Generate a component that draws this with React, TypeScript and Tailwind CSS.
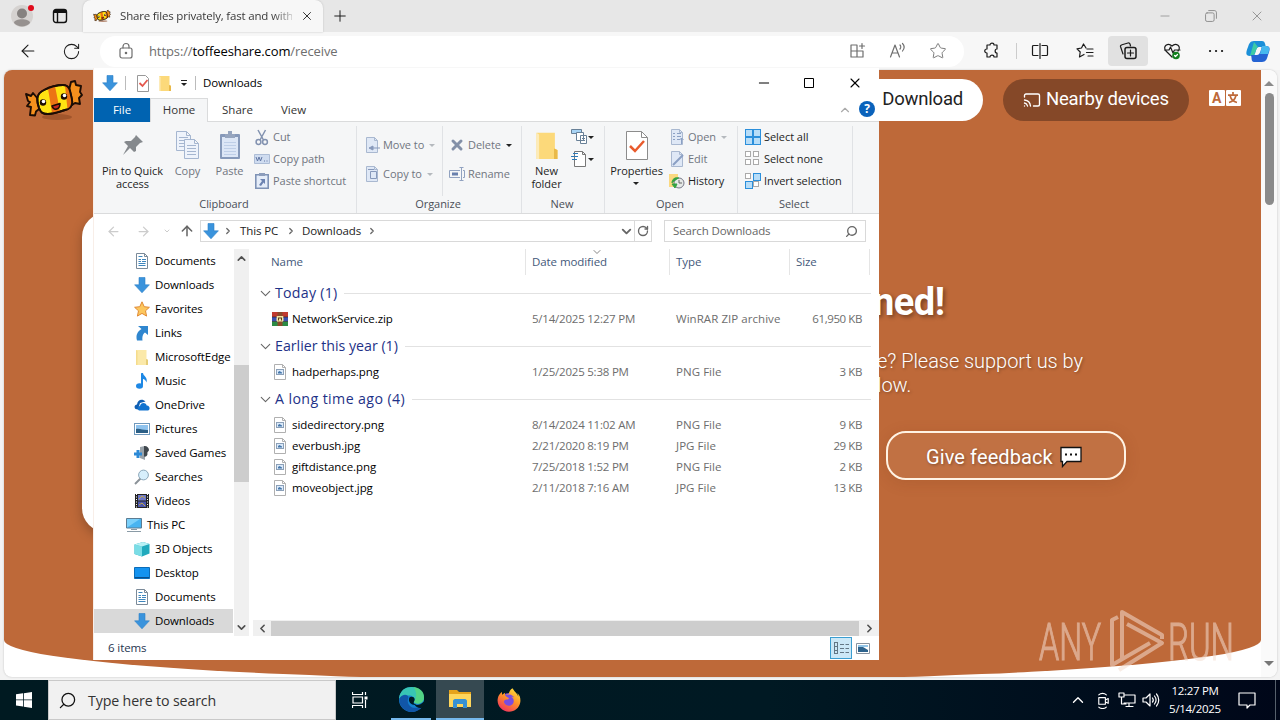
import type { ReactNode } from "react";
import {
    ArrowLeft,
    ArrowRight,
    ArrowUp,
    Cast,
    ChevronDown,
    ChevronLeft,
    ChevronRight,
    ChevronUp,
    Minus,
    Plus,
    RotateCw,
    Search,
    Star,
    X,
} from "lucide-react";
import { FaFirefoxBrowser } from "react-icons/fa6";

type FileItem = {
    name: string;
    date: string;
    type: string;
    size: string;
    zip?: boolean;
};

const groups: { title: string; spacing: string; files: FileItem[] }[] = [
    {
        title: "Today (1)",
        spacing: "tracking-[0.25px]",
        files: [{ name: "NetworkService.zip", date: "5/14/2025 12:27 PM", type: "WinRAR ZIP archive", size: "61,950 KB", zip: true }],
    },
    {
        title: "Earlier this year (1)",
        spacing: "tracking-normal",
        files: [{ name: "hadperhaps.png", date: "1/25/2025 5:38 PM", type: "PNG File", size: "3 KB" }],
    },
    {
        title: "A long time ago (4)",
        spacing: "tracking-[0.4px]",
        files: [
            { name: "sidedirectory.png", date: "8/14/2024 11:02 AM", type: "PNG File", size: "9 KB" },
            { name: "everbush.jpg", date: "2/21/2020 8:19 PM", type: "JPG File", size: "29 KB" },
            { name: "giftdistance.png", date: "7/25/2018 1:52 PM", type: "PNG File", size: "2 KB" },
            { name: "moveobject.jpg", date: "2/11/2018 7:16 AM", type: "JPG File", size: "13 KB" },
        ],
    },
];

/* ---------- small drawings ---------- */

function DownArrow() {
    return (
        <svg width="16" height="16" viewBox="0 0 16 16" className="shrink-0">
            <path d="M5 .5h6v7.3h4.4L8 15.8.6 7.8H5z" fill="#3a93dc" stroke="#2b7fc8" strokeWidth=".6" />
        </svg>
    );
}

function DocIcon() {
    return (
        <svg width="16" height="16" viewBox="0 0 16 16" className="shrink-0">
            <path d="M2.500.5h8l3 3v12h-11z" fill="#fff" stroke="#7b8a99" />
            <path d="M4.500 3.500h4M4.500 6.500h2.500M8 6.500h4M4.500 8.500h2.500M8 8.500h4M4.500 10.500h7M4.500 12.500h7" stroke="#3f86bd" />
            <path d="M10.500.5v3h3" fill="none" stroke="#7b8a99" />
        </svg>
    );
}

function FolderIcon({ size = 16, bright = false }: { size?: number; bright?: boolean }) {
    return (
        <svg width={size} height={size} viewBox="0 0 16 16" className="shrink-0">
            <path d="M2 1h10.500v9l1.500 1v5H2z" fill={bright ? "#fcd97a" : "#fbe9a9"} />
            <path d="M12 10l2 .8V16h-2z" fill={bright ? "#e9b949" : "#e6cd78"} />
            <path d="M2 1l1.500 1v14H2z" fill={bright ? "#fdebb8" : "#f5dc8c"} />
        </svg>
    );
}

function PictureFile() {
    return (
        <svg width="16" height="16" viewBox="0 0 16 16" className="shrink-0">
            <path d="M2.500.5h8l3 3v12h-11z" fill="#fff" stroke="#b0b0b0" />
            <path d="M10.500.5v3h3" fill="none" stroke="#b0b0b0" />
            <rect x="4.500" y="5.500" width="7" height="5" fill="#dceafa" stroke="#8ba0b8" />
            <path d="M6 9.500V8l1.500-1L10 8.500v1z" fill="#4577aa" />
        </svg>
    );
}

function ZipFile() {
    return (
        <svg width="16" height="16" viewBox="0 0 16 16" className="shrink-0">
            <path d="M0 1h16v5H0z" fill="#c03a30" />
            <path d="M0 6h16v4.500H0z" fill="#3a4fb0" />
            <path d="M0 10.500h16V15H0z" fill="#2b8b45" />
            <path d="M5.500 1h5v14h-5z" fill="#8c4a2a" />
            <path d="M4.500 5h7v5.500h-7z" fill="#f3e3a4" />
            <path d="M6.500 6.500v3M9.500 6.500v3M8 6v2" stroke="#5c3a18" />
            <path d="M0 6h5M11 6h5M0 10.500h5M11 10.500h5" stroke="#222" strokeWidth=".6" />
        </svg>
    );
}

function TreeIcon({ kind }: { kind: string }) {
    if (kind === "doc") return <DocIcon />;
    if (kind === "down") return <DownArrow />;
    if (kind === "folder") return <FolderIcon />;
    return (
        <svg width="16" height="16" viewBox="0 0 16 16" className="shrink-0">
            {kind === "star" && (
                <path d="M8 .8l2.200 4.900 5.200.6-3.900 3.500 1.100 5.300L8 12.400l-4.600 2.700 1.100-5.300L.6 6.300l5.200-.6z" fill="#fcc75e" stroke="#e08a35" />
            )}
            {kind === "link" && (
                <path d="M4 1h10v9l-3-2.600C9 9 8 11 8.500 15.500H3C1.500 10 3.500 6.500 7.500 4z" fill="#2f86cf" />
            )}
            {kind === "music" && (
                <>
                    <path d="M8 1v11.500" stroke="#1e88e5" strokeWidth="2" />
                    <path d="M7 0h2c.5 3.500 5 4 3.500 9.500-.5-2-2-3.300-4-3.800z" fill="#1e88e5" />
                    <ellipse cx="5.500" cy="13" rx="3.500" ry="2.700" fill="#1e88e5" />
                </>
            )}
            {kind === "cloud" && (
                <>
                    <path d="M1.500 12C-.5 10 1 7.500 3 7.500 3.500 3 8 1 11.500 4.500L6 6l-2 6.500z" fill="#0f5fb4" />
                    <path d="M5 13.500c-2-1-1.500-4 1-4.500.5-3.500 5.500-4 6.700-.6 3.300-.3 3.800 4.500 1.300 5.100z" fill="#1173d0" />
                </>
            )}
            {kind === "picture" && (
                <>
                    <rect x=".5" y="2.500" width="15" height="11" fill="#fff" stroke="#6f99bd" />
                    <path d="M2 4h12v8H2z" fill="#8fc3ee" />
                    <path d="M2 8c4-1 7 1.500 12 1v3H2z" fill="#2b5f86" />
                </>
            )}
            {kind === "game" && (
                <>
                    <path d="M6 2l5-1v14l-5-2z" fill="#9aa3aa" />
                    <path d="M10 1c2.500-.5 5 1.500 5 4-.5 2-2 1.500-1.500 4 0 2-2 3-3.500 2.500z" fill="#3f474d" />
                    <path d="M4 5v8M0 9h8" stroke="#2d8ad6" strokeWidth="3" />
                </>
            )}
            {kind === "search" && (
                <>
                    <path d="M7 9l-6 6" stroke="#8b9298" strokeWidth="2" />
                    <circle cx="9.500" cy="6" r="4.900" fill="#d7effc" stroke="#8da8ba" />
                </>
            )}
            {kind === "video" && (
                <>
                    <path d="M1 1h14v14H1z" fill="#222" />
                    <path d="M4 2h8v5.500H4z" fill="#6d78c8" />
                    <path d="M4 8.500h8V14H4z" fill="#4b57ad" />
                    <path d="M5 6l3-3 3 2M5 12l3-2 3 3" stroke="#c2a84a" fill="none" />
                    <path d="M2.500 1v14M13.500 1v14" stroke="#fff" strokeWidth="1" strokeDasharray="1 1.500" />
                </>
            )}
            {kind === "pc" && (
                <>
                    <path d="M.5 1.500h15v9.500H.5z" fill="#48b4f1" stroke="#5b7c93" />
                    <path d="M1 10.500L14 2H1z" fill="#7bd0fa" />
                    <path d="M5 12.500h6M1 14.500h14" stroke="#8a9ba6" />
                </>
            )}
            {kind === "cube" && (
                <>
                    <path d="M.5 3.500L9 1l6.500 2v9.500l-7.500 3-7.500-2.500z" fill="#20aabd" />
                    <path d="M.5 3.500L8 5.500v10l-7.500-2.500z" fill="#7adde6" />
                    <path d="M.5 3.500L9 1l6.500 2L8 5.500z" fill="#b8f1f5" />
                </>
            )}
            {kind === "desktop" && (
                <>
                    <path d="M.5 2.500h15v11H.5z" fill="#1493f0" stroke="#0b6cb8" />
                    <path d="M1 12.500h14" stroke="#0a4f8c" />
                </>
            )}
        </svg>
    );
}

function Candy({ className }: { className: string }) {
    return (
        <svg viewBox="0 0 60 42" className={className}>
            <ellipse cx="33" cy="38" rx="15" ry="3" fill="#8d4723" opacity=".6" />
            <g stroke="#1d0d05" strokeWidth="1.900" strokeLinejoin="round">
                <path d="M14 20L9 14 7 17 2 15l2 7 2 1-3 4 4 1-1 8 5 .5 1-4 5-4z" fill="#f5901d" />
                <path d="M45 11l2-8 4-1 1 4 5 1-1 6 2 3-3 3 1 6-5-1-3 2-6-7z" fill="#f5901d" />
                <path d="M20 11c6-3 12-5 19-5 4 0 6 2 7 6 1 5 3 10 2 13-1 4-3 5-7 6-6 2-12 4-17 4-5 0-7-1-9-6-2-6-4-14 5-18z" fill="#ffe312" />
                <path d="M24 9.500l7-2.500 5 25-8 2zM41 6.500c3 .5 4 3 5 7l1.500 10c0 4-1 6-4 7z" fill="#ec7414" stroke="none" />
                <path d="M20 11c6-3 12-5 19-5 4 0 6 2 7 6 1 5 3 10 2 13-1 4-3 5-7 6-6 2-12 4-17 4-5 0-7-1-9-6-2-6-4-14 5-18z" fill="none" />
                <circle cx="19" cy="23.500" r="3.200" fill="#1d0d05" stroke="none" />
                <circle cx="40" cy="17.500" r="3.200" fill="#1d0d05" stroke="none" />
                <circle cx="19.500" cy="22.500" r="1.800" fill="#fff" stroke="none" />
                <circle cx="40.500" cy="16.500" r="1.800" fill="#fff" stroke="none" />
                <path d="M28 27l8-2.500c0 6-6 8-8 2.500z" fill="#c3271f" strokeWidth="1.500" />
            </g>
        </svg>
    );
}

/* ---------- browser ---------- */

function Ico({ children, size = 18, className = "" }: { children: ReactNode; size?: number; className?: string }) {
    return (
        <svg width={size} height={size} viewBox="0 0 18 18" fill="none" stroke="currentColor" strokeWidth="1.200" strokeLinejoin="round" strokeLinecap="round" className={`shrink-0 ${className}`}>
            {children}
        </svg>
    );
}

function TabStrip() {
    return (
        <div className="flex h-8 items-center bg-[#e7e7e7] text-[#1a1a1a]">
            <div className="relative ml-2.5 size-6">
                <svg width="24" height="24" viewBox="0 0 24 24">
                    <circle cx="12" cy="12" r="11" fill="#d5d2d0" />
                    <circle cx="12" cy="9.500" r="5" fill="#85817f" />
                    <path d="M4 19c0-5 16-5 16 0-4 4.500-12 4.500-16 0z" fill="#96918f" />
                    <circle cx="21" cy="4" r="3" fill="#e00b1c" />
                </svg>
            </div>
            <svg width="16" height="16" viewBox="0 0 16 16" fill="none" stroke="#111" strokeWidth="1.400" className="ml-[18px]">
                <rect x="1.500" y="1.500" width="13" height="13" rx="2.500" />
                <path d="M2 3.500h12" strokeWidth="3" />
                <path d="M5.500 4v10" />
            </svg>
            <div className="ml-[15px] flex h-8 w-60 items-center rounded-t-lg bg-[#f7f7f7] shadow-[0_0_2px_#bbb]">
                <Candy className="ml-[10px] h-[14px] w-[18px]" />
                <span className="ml-[9px] w-[172px] whitespace-nowrap bg-linear-to-r from-[#333] from-88% to-[#33333344] bg-clip-text text-[11.500px] tracking-[-0.18px] text-transparent">Share files privately, fast and with</span>
                <X size={14} strokeWidth={1.500} className="ml-[8px]" />
            </div>
            <Plus size={18} strokeWidth={1.300} className="ml-[8px]" />
            <div className="ml-auto flex items-center text-[#8b8b8b]">
                <Minus size={14} strokeWidth={1.300} />
                <Ico size={14} className="ml-[32px]">
                    <rect x="2" y="5" width="11" height="11" rx="2" />
                    <path d="M6 2h7c2 0 3 1 3 3v7" />
                </Ico>
                <X size={16} strokeWidth={1.300} className="ml-[31px] mr-[15px]" />
            </div>
        </div>
    );
}

function Toolbar() {
    return (
        <div className="flex h-[38px] items-center bg-[#f7f7f7] text-[#1b1b1b]">
            <ArrowLeft size={20} strokeWidth={1.300} className="ml-[18px]" />
            <RotateCw size={19} strokeWidth={1.300} className="ml-[24px]" />
            <div className="ml-[19px] flex h-[31px] w-[864px] items-center rounded-full bg-white text-[#6e6e6e]">
                <Ico className="ml-[17px]">
                    <rect x="3" y="6" width="12" height="10" rx="2" />
                    <path d="M6 6V4.500a3 3 0 016 0V6" />
                    <circle cx="9" cy="11" r=".7" fill="currentColor" />
                </Ico>
                <span className="ml-[14px] pt-px text-[13px] tracking-[-0.1px]">
                    https://<span className="text-black">toffeeshare.com</span>/receive
                </span>
                <div className="ml-auto mr-[17px] flex items-center gap-[22px]">
                    <Ico>
                        <path d="M2 3h6v6H2zM2 9h6v6H2zM8 9h6v6H8zM13 1.500v5M10.500 4h5" />
                    </Ico>
                    <Ico>
                        <path d="M1.500 15L6 3l4.500 12M3 11h6M11 3c1 1 1 3 0 4M13.500 1.500c2 2 2 5 0 7.500" />
                    </Ico>
                    <Star size={18} strokeWidth={1.200} />
                </div>
            </div>
            <Ico className="ml-[19px]">
                <path d="M4 3h3c0-2.500 4-2.500 4 0h3v4c-2.500 0-2.500 4 0 4v4h-3c0-2.500-4-2.500-4 0H4v-4c-3 0-3-4 0-4z" />
            </Ico>
            <div className="ml-[15px] h-4 w-px bg-[#ccc]" />
            <Ico className="ml-[14px]">
                <path d="M7 3.500H2.500a1 1 0 00-1 1v8a1 1 0 001 1H7M11 3.500h4.500a1 1 0 011 1v8a1 1 0 01-1 1H11M9 1.500v15" />
            </Ico>
            <Ico className="ml-[27px]">
                <path d="M10 6L7.500 2 5.500 6l-4.500.8 3.200 3.200-.7 5L8 12.500M11 7h6M10.500 10.500H17M12 14h5" />
            </Ico>
            <div className="ml-[14px] flex h-[30px] w-10 items-center justify-center rounded bg-[#e1e1e1]">
                <Ico>
                    <path d="M4 12L1.500 4.500C1.200 3.500 2 3 3 2.700L9 1c1-.3 1.700.2 2 1l.5 2" />
                    <rect x="6" y="5.500" width="11" height="11" rx="2" strokeWidth="1.500" />
                    <path d="M11.500 8v6M8.500 11h6" />
                </Ico>
            </div>
            <Ico className="ml-[15px]">
                <path d="M9 15L3 9C-1 4.500 5 0 9 4c4-4 10 .5 6 5M1.500 8H6l1.500-3 2.500 6 1.500-3H17" />
                <circle cx="13" cy="13.500" r="3.800" fill="#13801f" stroke="none" />
                <path d="M11.500 13.500l1 1 2-2" stroke="#fff" />
            </Ico>
            <Ico className="ml-[26px]">
                <path d="M3 9h.1M9 9h.1M15 9h.1" strokeWidth="2.200" />
            </Ico>
            <svg width="26" height="26" viewBox="0 0 26 26" className="ml-[20px]">
                <path d="M9 3h8c3 0 3 3 4 6h-7c-3 0-3 5-5 9H5c-5 0-4-4-2-9 1-3 2-6 6-6z" fill="#1b8fd8" />
                <path d="M9 4l-4 14c6 1 5-7 8-9z" fill="#3ccba6" />
                <path d="M17 24H9c-3 0-2-4-3-7h6c3 0 4-5 5-9h4c5 0 4 4 2 9-1 4-2 7-6 7z" fill="#2463d3" />
                <path d="M17 8h4c5 0 3 5 2 8h-8z" fill="#45b8ee" />
            </svg>
        </div>
    );
}

function WebPage() {
    return (
        <div className="mx-1 mr-[3px] flex h-[607px] overflow-hidden rounded-lg bg-white shadow-[0_0_2px_#bbb]">
            <div className="relative h-[611px] w-[1257px] rounded-b-[50%_41px] bg-[#be6939] text-white [font-family:Roboto,sans-serif]">
                <div className="flex h-[60px] items-center">
                    <Candy className="ml-[20px] h-[42px] w-[60px]" />
                    <div className="ml-auto flex h-[42px] items-center rounded-full bg-white pl-10 pr-5 text-[18.500px] tracking-[-0.2px] text-[#222]">Download</div>
                    <div className="ml-5 flex h-[42px] w-[186px] items-center rounded-full bg-[#854828] pl-5 text-[18.500px] tracking-[-0.2px]">
                        <Cast size={18} strokeWidth={1.800} className="mr-[5px] shrink-0" />
                        <span className="whitespace-nowrap">Nearby devices</span>
                    </div>
                    <div className="-mt-1 ml-5 mr-[20px] flex w-[32px] gap-px text-[14px] font-bold leading-4 text-[#be6939]">
                        <span className="flex h-4 w-4 items-center justify-center rounded-[1px] bg-white">A</span>
                        <span className="flex h-4 w-4 items-center justify-center rounded-[1px] bg-white">
                            <svg width="12" height="12" viewBox="0 0 12 12" fill="none" stroke="currentColor" strokeWidth="1.700">
                                <path d="M6 0v3M1 3.200h10M3 3.500c1 4 3 6 7 7M9 3.500c-1 4-3 6-7 7" />
                            </svg>
                        </span>
                    </div>
                </div>
                {/* main card, mostly covered by the explorer window */}
                <div className="ml-[78px] mt-[83px] h-[319px] w-[600px] rounded-3xl bg-white shadow-[0_4px_12px_rgba(0,0,0,0.25)]" />
                <div className="absolute left-[869px] top-[208px]">
                    <h1 className="text-[38px] font-bold leading-[48px] tracking-[-0.5px] [text-shadow:2px_2px_4px_rgba(0,0,0,0.4)]">ned!</h1>
                    <p className="ml-[4px] mt-[23px] whitespace-pre text-[20px] font-light leading-6 tracking-[-0.05px] [text-shadow:1px_1px_3px_rgba(0,0,0,0.35)]">{"e? Please support us by\nlow."}</p>
                    <button className="ml-[13px] mt-[34px] flex h-[49px] w-60 items-center rounded-[20px] border-2 border-[#fff3e4] bg-white/5 pl-[38px] pt-[2px] text-[20px] tracking-[0.1px] shadow-[0_3px_15px_rgba(110,50,20,0.15)] [text-shadow:1px_1px_3px_rgba(0,0,0,0.35)]">
                        Give feedback
                        <svg width="24" height="22" viewBox="0 0 24 22" className="ml-[6px]">
                            <path d="M2 1.500h20v14H8l-4.500 5v-5H2z" fill="#fff" stroke="#111" strokeWidth="1.300" />
                            <path d="M6 8.500h2M11 8.500h2M16 8.500h2" stroke="#111" strokeWidth="2" />
                        </svg>
                    </button>
                </div>
            </div>
            <div className="flex w-4 flex-col items-center bg-[#fafafa] py-[11px]">
                <div className="border-x-[5px] border-b-[5px] border-x-transparent border-b-[#8b8b8b]" />
                <div className="mt-[7px] h-[112px] w-[9px] shrink-0 rounded-full bg-[#8b8b8b]" />
                <div className="mt-auto border-x-[5px] border-t-[5px] border-x-transparent border-t-[#777]" />
            </div>
        </div>
    );
}

/* ---------- file explorer ---------- */

function Caret({ dim = false, className = "ml-[5px]" }: { dim?: boolean; className?: string }) {
    return <span className={`border-x-[3px] border-t-[3px] border-x-transparent ${dim ? "border-t-[#b5b9be]" : "border-t-[#222]"} ${className}`} />;
}

function Cmd({ icon, label, dim = false, caret }: { icon: ReactNode; label: string; dim?: boolean; caret?: "on" | "off" }) {
    return (
        <div className={`flex h-[22px] items-center whitespace-nowrap ${dim ? "text-[#707580]" : "text-[#1e1e1e]"}`}>
            <span className="mr-[3px] flex w-4 shrink-0 justify-center">{icon}</span>
            {label}
            {caret && <Caret dim={caret === "off"} />}
        </div>
    );
}

function Group({ label, width, children }: { label: string; width: string; children: ReactNode }) {
    return (
        <div className={`flex flex-col border-r border-[#e0e2e5] ${width}`}>
            <div className="flex h-[70px]">{children}</div>
            <div className="pr-[2px] text-center leading-[16px] text-[#4a4f57]">{label}</div>
        </div>
    );
}

function Big({ icon, label, width, dim = false }: { icon: ReactNode; label: string; width: string; dim?: boolean }) {
    return (
        <div className={`flex flex-col items-center ${width}`}>
            <div className="flex h-[38px] items-center justify-center">{icon}</div>
            <div className={`whitespace-pre text-center leading-[13px] ${dim ? "text-[#707580]" : "text-[#1e1e1e]"}`}>{label}</div>
        </div>
    );
}

function Page({ size = 16, children }: { size?: number; children?: ReactNode }) {
    return (
        <svg width={size} height={size} viewBox="0 0 16 16" fill="none">
            <path d="M2.500.5h8l3 3v12h-11z" fill="#dfe8f6" stroke="#a9b8d0" />
            <path d="M10.500.5v3h3" stroke="#a9b8d0" />
            {children}
        </svg>
    );
}

function Ribbon() {
    return (
        <div className="flex h-[92px] border-b border-[#dadbdc] bg-[#f5f6f7] pt-[4px] text-[11px] tracking-[-0.05px]">
            <Group label="Clipboard" width="w-[263px]">
                <Big
                    width="w-[77px]"
                    label={"Pin to Quick\naccess"}
                    icon={
                        <svg width="24" height="24" viewBox="0 0 24 24" fill="#85898d">
                            <path d="M15 2l7 7-3 1-4 4v4l-2 1-4-4-7 7 5-9-4-4 2-1 5 0 4-4z" />
                        </svg>
                    }
                />
                <Big
                    dim
                    width="w-[33px]"
                    label="Copy"
                    icon={
                        <svg width="26" height="30" viewBox="0 0 26 30" fill="#eef3fb" stroke="#a5b6d0">
                            <path d="M1.500 1.500h10l4 4v15h-14zM11.500 1.500v4h4M4 7.500h9M4 10.500h9M4 13.500h8M4 16.500h7" />
                            <path d="M9.500 9.500h10l4 4v15h-14zM19.500 9.500v4h4M12 15.500h9M12 18.500h9M12 21.500h9M12 24.500h9" />
                        </svg>
                    }
                />
                <Big
                    dim
                    width="w-[51px]"
                    label="Paste"
                    icon={
                        <svg width="22" height="30" viewBox="0 0 22 30">
                            <rect x="1" y="4" width="20" height="25" rx="1" fill="#8699ba" />
                            <path d="M3 7h16v20H3z" fill="#dce6f6" />
                            <path d="M6 4h3V1h4v3h3v4H6z" fill="#96a5bf" />
                            <path d="M5 12.500h12M5 15.500h12M5 18.500h12M5 21.500h12M5 24.500h12" stroke="#becee7" />
                        </svg>
                    }
                />
                <div className="-ml-px flex flex-col">
                    <Cmd
                        dim
                        label="Cut"
                        icon={
                            <svg width="16" height="17" viewBox="0 0 16 17" fill="none" stroke="#8292b0" strokeWidth="1.500">
                                <path d="M4 1l5.500 10M11.500 1L6 11" />
                                <circle cx="4.500" cy="13" r="2.400" />
                                <circle cx="11" cy="13" r="2.400" />
                            </svg>
                        }
                    />
                    <Cmd
                        dim
                        label="Copy path"
                        icon={
                            <svg width="16" height="10" viewBox="0 0 16 10" fill="none">
                                <path d="M.5.5h15v9H.5z" fill="#cfdcf0" stroke="#adbdd6" />
                                <path d="M2 3l1.500 4L5 3l1.500 4L8 3M10 7h1M12.500 7h1" stroke="#6076a4" />
                            </svg>
                        }
                    />
                    <Cmd
                        dim
                        label="Paste shortcut"
                        icon={
                            <svg width="14" height="16" viewBox="0 0 14 16">
                                <path d="M.8 1.800h12.400v13.400H.8z" fill="#e5edf9" stroke="#7f93b6" strokeWidth="1.600" />
                                <path d="M4 0h6v3H4z" fill="#8c9dbb" />
                                <path d="M5 6h5v5L8.500 9.500 6 13 4 12l3-4z" fill="#6c83b1" />
                            </svg>
                        }
                    />
                </div>
            </Group>
            <Group label="Organize" width="w-[165px]">
                <div className="flex w-[86px] flex-col gap-[7px] border-r border-[#e0e2e5] pl-[7px] pt-[8px]">
                    <Cmd dim label="Move to" caret="off" icon={<Page><path d="M9 9v4l-4-2zM9 11h7" fill="#8799bb" stroke="#8799bb" /></Page>} />
                    <Cmd dim label="Copy to" caret="off" icon={<Page><path d="M6.500 5.500h6v7h-6zM4 3.500h6" stroke="#8799bb" /></Page>} />
                </div>
                <div className="flex flex-col gap-[7px] pl-[6px] pt-[8px]">
                    <Cmd dim label="Delete" caret="on" icon={<X size={18} strokeWidth={4.500} color="#8390a8" />} />
                    <Cmd
                        dim
                        label="Rename"
                        icon={
                            <svg width="16" height="14" viewBox="0 0 16 14" fill="none" stroke="#91a2c0">
                                <path d="M11 3.500H.5v7H11M14 3.500h1.500v7H14M12.500 1v12M10.500.5h4M10.500 13.500h4" />
                                <path d="M3 7h6" stroke="#6980ad" strokeWidth="3" />
                            </svg>
                        }
                    />
                </div>
            </Group>
            <Group label="New" width="w-[83px]">
                <Big width="w-[49px]" label={"New\nfolder"} icon={<FolderIcon size={28} bright />} />
                <div className="flex flex-col">
                    <div className="flex h-[22px] items-center">
                        <svg width="17" height="16" viewBox="0 0 17 16" fill="#fff" stroke="#688097">
                            <path d="M.5.5h10v4H.5z" fill="#a8d4f5" />
                            <path d="M5.500 3.500h7v8h-7zM9.500 6.500h6v8h-6zM11 9.500h3M11 11.500h3" />
                        </svg>
                        <Caret className="ml-0" />
                    </div>
                    <div className="flex h-[22px] items-center">
                        <svg width="17" height="16" viewBox="0 0 17 16" fill="#fff" stroke="#777">
                            <path d="M3.500.5h8l3 3v12h-11zM11.500.5v3h3" />
                            <path d="M0 5.500h7M1 8.500h5M2 2.500h5" stroke="#2d7ab8" />
                        </svg>
                        <Caret className="ml-0" />
                    </div>
                </div>
            </Group>
            <Group label="Open" width="w-[133px]">
                <div className="relative w-[64px]">
                    <Big
                        width="w-[63px]"
                        label="Properties"
                        icon={
                            <svg width="22" height="29" viewBox="0 0 22 29" fill="none">
                                <path d="M.5.5h15l6 6v22H.5z" fill="#fff" stroke="#8c8c8c" />
                                <path d="M15.500.5v6h6" stroke="#8c8c8c" />
                                <path d="M4 15l5 5 9-10" stroke="#e95b2d" strokeWidth="2.500" />
                            </svg>
                        }
                    />
                    <span className="absolute left-[23px] top-[56px] flex"><Caret /></span>
                </div>
                <div className="flex flex-col">
                    <Cmd dim label="Open" caret="off" icon={<Page><path d="M4 4.500h2M8 4.500h4M4 7.500h2M8 7.500h4M4 10.500h2M8 10.500h3M12.500 15v-6M10.500 11l2-2 2 2" stroke="#8ba0c4" /></Page>} />
                    <Cmd dim label="Edit" icon={<Page><path d="M6 12L14 4M4 14l2-2" stroke="#8ba0c4" strokeWidth="2" /></Page>} />
                    <Cmd
                        label="History"
                        icon={
                            <svg width="16" height="16" viewBox="0 0 16 16">
                                <path d="M0 1h9v13H0z" fill="#fbd981" />
                                <circle cx="10" cy="10" r="5" fill="#e5e9e7" stroke="#778" />
                                <path d="M10 7v3h3" stroke="#666" fill="none" />
                                <path d="M3 10c0-4 3-6 7-5M3 11l3 4 2-4z" fill="#33a343" stroke="#33a343" />
                            </svg>
                        }
                    />
                </div>
            </Group>
            <Group label="Select" width="w-[115px]">
                <div className="flex flex-col pl-[7px]">
                    {["Select all", "Select none", "Invert selection"].map((label, i) => (
                        <Cmd
                            key={label}
                            label={label}
                            icon={
                                <svg width="16" height="16" viewBox="0 0 16 16">
                                    {[[1, 1], [9, 1], [1, 9], [9, 9]].map(([x, y], n) => {
                                        const on = i === 0 || (i === 2 && (n === 1 || n === 2));
                                        return <rect key={n} x={x - 0.5} y={y - 0.5} width={on ? 7 : 5} height={on ? 7 : 5} fill={on ? "#b7ddf8" : "#fff"} stroke={on ? "#2b8fdb" : "#aaa"} />;
                                    })}
                                </svg>
                            }
                        />
                    ))}
                </div>
            </Group>
        </div>
    );
}

function ExplorerHeader() {
    return (
        <>
            <div className="flex h-[30px] items-center text-[11.500px] text-black">
                <span className="ml-2"><DownArrow /></span>
                <div className="ml-[7px] mr-[9px] h-[14px] w-px bg-[#bbb]" />
                <svg width="16" height="17" viewBox="0 0 16 17" fill="none">
                    <path d="M2.500.5h8l3 3v13h-11z" fill="#fff" stroke="#999" />
                    <path d="M4.500 8l3 3 5-6" stroke="#e4574c" strokeWidth="1.800" />
                </svg>
                <span className="ml-[6px]"><FolderIcon bright /></span>
                <span className="ml-[8px] flex flex-col items-center gap-[2px]">
                    <span className="h-px w-[6px] bg-[#222]" />
                    <span className="border-x-[3px] border-t-[3px] border-x-transparent border-t-[#222]" />
                </span>
                <div className="ml-[8px] mr-[7px] h-[14px] w-px bg-[#bbb]" />
                <span className="tracking-[-0.1px]">Downloads</span>
                <div className="ml-auto flex items-center">
                    <Minus size={16} strokeWidth={1.500} />
                    <svg width="12" height="12" viewBox="0 0 12 12" fill="none" stroke="#000" className="ml-[31px]">
                        <path d="M1.500 1.500h9v9h-9z" />
                    </svg>
                    <X size={16} strokeWidth={1.600} className="ml-[32px] mr-[16px]" />
                </div>
            </div>
            <div className="flex h-6 items-center border-b border-[#dadbdc] text-center text-[11.500px] text-[#333]">
                <div className="h-6 w-[56px] bg-[#0063b1] leading-6 text-white">File</div>
                <div className="h-6 w-[58px] border-x border-t border-[#dadbdc] bg-[#f5f6f7] leading-[22px]">Home</div>
                <div className="w-[59px]">Share</div>
                <div className="w-[53px]">View</div>
                <ChevronUp size={14} strokeWidth={2} className="ml-auto text-[#aaa]" />
                <span className="-mt-[2px] ml-[7px] mr-1 size-4 rounded-full bg-[#0a62bb] text-[12px] font-bold leading-4 text-white">?</span>
            </div>
        </>
    );
}

function AddressRow() {
    return (
        <div className="flex h-[35px] items-center pb-px text-[11.500px] text-[#222]">
            <ArrowLeft size={15} className="ml-3 text-[#ccc]" />
            <ArrowRight size={15} className="ml-[15px] text-[#ccc]" />
            <ChevronDown size={8} strokeWidth={3} className="ml-[12px] text-[#ccc]" />
            <ArrowUp size={16} strokeWidth={2.300} className="ml-[8px] text-[#666]" />
            <div className="ml-[5px] flex h-[22px] w-[452px] items-center border border-[#d9d9d9]">
                <span className="ml-[2px]"><DownArrow /></span>
                <ChevronRight size={10} strokeWidth={3} className="ml-[4px] mr-[7px] text-[#666]" />
                <span className="w-[46px] whitespace-nowrap tracking-[-0.1px]">This PC</span>
                <ChevronRight size={10} strokeWidth={3} className="mr-[6px] text-[#666]" />
                <span className="w-[65px] tracking-[-0.1px]">Downloads</span>
                <ChevronRight size={10} strokeWidth={3} className="text-[#666]" />
                <ChevronDown size={15} strokeWidth={3} className="ml-auto text-[#666]" />
                <div className="flex h-full w-[17px] items-center justify-center border-l border-[#d9d9d9]">
                    <RotateCw size={12} strokeWidth={2.700} className="text-[#666]" />
                </div>
            </div>
            <div className="ml-[12px] flex h-[22px] w-[202px] items-center border border-[#d9d9d9] pl-2 text-[#666]">
                <span className="tracking-[-0.12px]">Search Downloads</span>
                <Search size={13} strokeWidth={2.500} className="ml-auto mr-[7px] -scale-x-100" />
            </div>
        </div>
    );
}

const tree = [
    ["Documents", "doc"],
    ["Downloads", "down"],
    ["Favorites", "star"],
    ["Links", "link"],
    ["MicrosoftEdge", "folder"],
    ["Music", "music"],
    ["OneDrive", "cloud"],
    ["Pictures", "picture"],
    ["Saved Games", "game"],
    ["Searches", "search"],
    ["Videos", "video"],
    ["This PC", "pc"],
    ["3D Objects", "cube"],
    ["Desktop", "desktop"],
    ["Documents", "doc"],
    ["Downloads", "down"],
];

function NavTree() {
    return (
        <div className="flex h-[387px] w-[159px] text-[11.500px] tracking-[-0.1px] text-black">
            <div className="w-[139px] overflow-hidden">
                {tree.map(([label, kind], i) => (
                    <div key={i} className={`flex h-6 items-center gap-[5px] whitespace-nowrap ${kind === "pc" ? "pl-8" : "pl-10"} ${i === 15 ? "bg-[#d9d9d9]" : ""}`}>
                        <TreeIcon kind={kind} />
                        {label}
                    </div>
                ))}
            </div>
            <div className="ml-px flex w-[15px] flex-col items-center bg-[#f0f0f0] text-[#505050]">
                <ChevronUp size={13} strokeWidth={3} className="mt-[3px]" />
                <div className="mt-[100px] h-[117px] w-[15px] bg-[#cdcdcd]" />
                <ChevronDown size={13} strokeWidth={3} className="mb-[2px] mt-auto" />
            </div>
        </div>
    );
}

function FileList() {
    return (
        <div className="flex h-[387px] w-[626px] flex-col text-[11.500px] tracking-[-0.08px]">
            <div className="flex h-[26px] items-center text-[#44597a]">
                <div className="h-full w-[273px] border-r border-[#e5e5e5] pl-[18px] leading-[26px]">Name</div>
                <div className="relative h-full w-[144px] border-r border-[#e5e5e5] pl-[6px] leading-[26px]">
                    Date modified
                    <ChevronDown size={12} strokeWidth={1.800} className="absolute left-[65px] top-[-3px] text-[#777]" />
                </div>
                <div className="h-full w-[120px] border-r border-[#e5e5e5] pl-[6px] leading-[26px]">Type</div>
                <div className="h-full w-[80px] border-r border-[#e5e5e5] pl-[6px] leading-[26px]">Size</div>
            </div>
            <div className="pt-px">
                {groups.map((g) => (
                    <div key={g.title}>
                        <div className="flex h-8 items-center whitespace-nowrap pl-[4px] pr-[8px] pt-[2px] text-[14.200px] leading-none text-[#1e3287]">
                            <ChevronDown size={17} strokeWidth={1.500} className="mr-px shrink-0 text-[#666]" />
                            <span className={g.spacing}>{g.title}</span>
                            <div className="ml-[7px] h-px flex-1 bg-[#e2e2e2]" />
                        </div>
                        {g.files.map((f) => (
                            <div key={f.name} className="flex h-[21px] items-center whitespace-nowrap text-[#6d6d6d]">
                                <div className="flex w-[279px] items-center gap-1 pl-[19px] text-black">
                                    {f.zip ? <ZipFile /> : <PictureFile />}
                                    {f.name}
                                </div>
                                <div className="w-[144px] tracking-[-0.22px]">{f.date}</div>
                                <div className="w-[110px] tracking-[0.05px]">{f.type}</div>
                                <div className="w-[76px] text-right tracking-[-0.4px]">{f.size}</div>
                            </div>
                        ))}
                    </div>
                ))}
            </div>
            <div className="mt-auto flex h-4 items-center bg-[#f0f0f0] text-[#505050]">
                <ChevronLeft size={13} strokeWidth={3} className="ml-[3px]" />
                <div className="ml-[2px] h-[15px] w-[588px] bg-[#cdcdcd]" />
                <ChevronRight size={13} strokeWidth={3} className="ml-[4px]" />
            </div>
        </div>
    );
}

function Explorer() {
    return (
        <div className="absolute left-[94px] top-[68px] h-[592px] w-[785px] overflow-hidden bg-white shadow-[-1px_0_0_#f8eee8]">
            <ExplorerHeader />
            <Ribbon />
            <AddressRow />
            <div className="flex">
                <NavTree />
                <FileList />
            </div>
            <div className="flex h-6 items-center pl-[14px] text-[11.500px] tracking-[-0.1px] text-[#26354f]">
                6 items
                <div className="ml-auto mr-[27px] flex h-[22px] w-[22px] items-center justify-center border border-[#3b9ed1] bg-[#cce8f7]">
                    <svg width="17" height="14" viewBox="0 0 17 14" fill="none" stroke="#637785" className="shrink-0">
                        <path d="M1.500 1v12M4.500 1v12M1 1.500h4M1 5.500h4M1 9.500h4M1 12.500h4M7 3.500h4M7 7.500h4M7 11.500h4M12.500 3.500H16M12.500 7.500H16M12.500 11.500H16" />
                    </svg>
                </div>
                <div className="-ml-[23px] mr-[9px]">
                    <svg width="14" height="11" viewBox="0 0 14 11">
                        <path d="M.5.5h13v10H.5z" fill="#fff" stroke="#8793a0" />
                        <path d="M2 2h10v2H2z" fill="#92c5e8" />
                        <path d="M2 4h5l5 3v2H2z" fill="#2d638d" />
                    </svg>
                </div>
            </div>
        </div>
    );
}

/* ---------- taskbar ---------- */

function Taskbar() {
    return (
        <div className="flex h-10 items-center bg-linear-to-r from-[#001a21] via-[#001923] via-60% to-[#000719] text-white">
            <div className="flex w-12 justify-center">
                <svg width="16" height="16" viewBox="0 0 16 16" fill="#fff">
                    <path d="M0 2.300l7-1v6.200H0zM7.800 1.200L16 0v7.500H7.800zM0 8.300h7v6.200l-7-1zM7.800 8.300H16V16l-8.200-1.200z" />
                </svg>
            </div>
            <div className="flex h-full w-72 items-center border border-[#c9c9c9] bg-[#f1f1f1] text-[14.200px] text-[#333]">
                <Search size={19} strokeWidth={1.600} className="ml-[9px] -scale-x-100 text-[#111]" />
                <span className="ml-[11px] pt-px tracking-[-0.13px]">Type here to search</span>
            </div>
            <svg width="16" height="16" viewBox="0 0 16 16" fill="none" stroke="#fff" strokeWidth="1.200" className="ml-4">
                <path d="M.5 0v2.500h10V0M1 5h9.500v6H1zM.5 16v-2.500h10V16M13.500 0v3M13.500 8v8" />
                <path d="M12.500 4.500h3v3h-3z" fill="#fff" stroke="none" />
            </svg>
            <div className="ml-[23px] mr-[5px] flex h-full w-10 items-center justify-center border-b-2 border-[#76b9ed]">
                <svg width="25" height="25" viewBox="0 0 24 24">
                    <circle cx="12" cy="12" r="12" fill="#1380cf" />
                    <path d="M0 11C1 3 6 0 12 0c8 0 12 5 12 10 0 4-3 6-6 6-4 0-4-2-3-3 1-5-7-7-15-2z" fill="#38c5b4" />
                    <path d="M14 0c7 1 10 5 10 10 0 4-3 6-6 6-4 0-4-2-3-3 1-2 3-7-1-13z" fill="#5bd776" opacity=".75" />
                    <path d="M9 10c-2 5 1 10 7 10 3 0 5-1 7-2-3 5-8 6-12 6C2 23-1 14 1 10c3-4 8-3 8 0z" fill="#1156a8" />
                    <path d="M10 10c1-1 5-1 5 2 0 2-3 4 2 5-4 1-9-2-7-7z" fill="#001a23" />
                    <path d="M15 17c3 1 6 0 9-3v4l-2 2c-3 1-6-1-7-3z" fill="#001a23" />
                </svg>
            </div>
            <div className="flex h-full w-12 items-center justify-center border-b-2 border-[#76b9ed] bg-[#364951]">
                <svg width="24" height="20" viewBox="0 0 24 20">
                    <path d="M1 1h8l2 2h12v5H1z" fill="#e7a31b" />
                    <path d="M1 5h22v13H1z" fill="#ffd65c" />
                    <path d="M5 19v-7c0-1 1-2 2-2h10c1 0 2 1 2 2v7h-4v-4H9v4z" fill="#3791d4" />
                </svg>
            </div>
            <div className="ml-[13px] size-6">
                <svg width="24" height="24" viewBox="0 0 24 24">
                    <defs>
                        <linearGradient id="fox" x1=".8" y1="0" x2=".2" y2="1">
                            <stop offset="0" stopColor="#ffe13c" />
                            <stop offset=".45" stopColor="#ff9328" />
                            <stop offset="1" stopColor="#f02c62" />
                        </linearGradient>
                    </defs>
                    <circle cx="12" cy="13" r="8" fill="#7a4ce0" />
                    <FaFirefoxBrowser size={24} fill="url(#fox)" />
                </svg>
            </div>
            <div className="ml-auto flex items-center">
                <ChevronUp size={18} strokeWidth={1.800} />
                <Ico size={17} className="ml-[8px]">
                    <path d="M4 6h7v7H4zM11 8.500l3-1.500v5l-3-1.500M4 3c2-2 6-2 8 0M4 16c2 2 6 2 8 0" />
                </Ico>
                <Ico size={18} className="ml-[6px]">
                    <path d="M1 2h5v4H1zM3.500 6v7H8M7 4h10v8H6M11 12v3M8 15.500h7" />
                </Ico>
                <Ico size={18} className="ml-[6px]">
                    <path d="M1 7h3l4-4v12l-4-4H1zM10.500 7c1 1.500 1 3 0 4M12.500 5c2 2.500 2 5.500 0 8M14.500 3c3 3.500 3 8.500 0 12" />
                </Ico>
                <div className="ml-[7px] w-[56px] text-center text-[11.500px] leading-[18px] tracking-[-0.3px]">
                    <div className="whitespace-nowrap">12:27 PM</div>
                    <div className="whitespace-nowrap">5/14/2025</div>
                </div>
                <Ico size={18} className="ml-[15px] mr-[19px]">
                    <path d="M1 2h16v12h-5l-3 3v-3H1z" />
                </Ico>
                <div className="h-10 w-px bg-[#56606c]" />
                <div className="w-[4px]" />
            </div>
        </div>
    );
}

function Watermark() {
    return (
        <svg width="200" height="70" viewBox="0 0 200 70" className="absolute left-[1038px] top-[609px] overflow-visible" opacity=".55">
            <g fill="#f4ddd0" stroke="#f4ddd0" strokeWidth="1.200" fontFamily="Roboto, sans-serif" fontSize="52.500" fontWeight="300">
                <text x="1" y="50.500" textLength="62" lengthAdjust="spacingAndGlyphs">ANY</text>
                <text x="130" y="50.500" textLength="66" lengthAdjust="spacingAndGlyphs">RUN</text>
            </g>
            <g fill="none" stroke="#f4ddd0" strokeWidth="4" strokeLinejoin="round">
                <path d="M80 8l-6 3v45l38-22" />
                <path d="M84 50V3l40 23v4M89 15l35 19-43 27" />
            </g>
        </svg>
    );
}

export default function App() {
    return (
        <main className="relative h-[720px] w-[1280px] overflow-hidden bg-[#f3f3f3] [font-family:'Open_Sans','Noto_Sans',sans-serif]">
            <div className="h-[680px]">
                <TabStrip />
                <Toolbar />
                <WebPage />
            </div>
            <Explorer />
            <Taskbar />
            <Watermark />
        </main>
    );
}
